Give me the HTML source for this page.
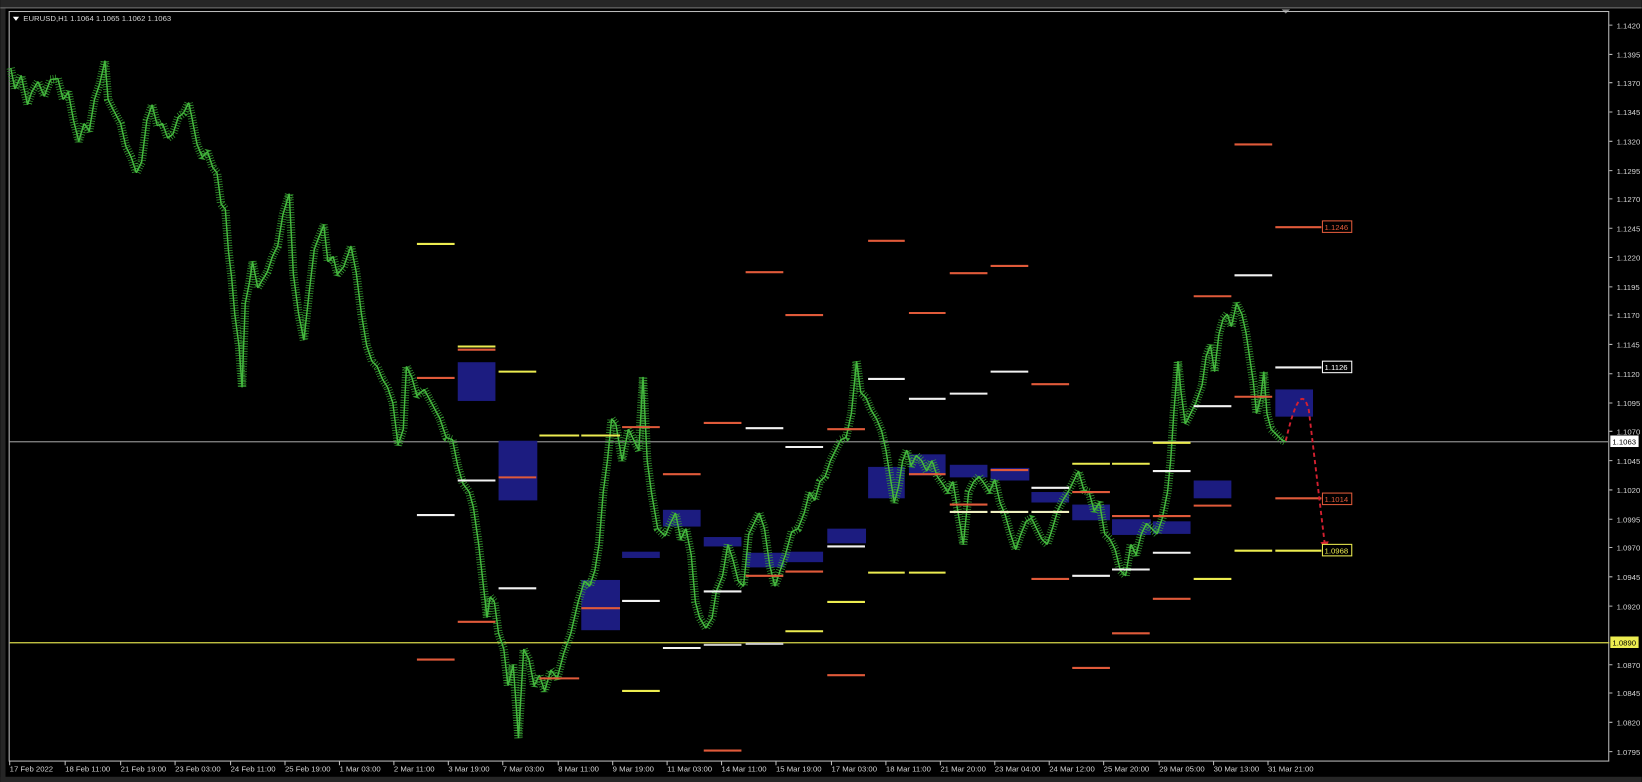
<!DOCTYPE html>
<html><head><meta charset="utf-8"><style>
html,body{margin:0;padding:0;background:#000;width:1642px;height:782px;overflow:hidden}
svg{display:block}
text{font-family:"Liberation Sans",sans-serif;font-size:7.4px;fill:#d4d4d4}
</style></head><body>
<svg width="1642" height="782" viewBox="0 0 1568 747" xmlns="http://www.w3.org/2000/svg">
<defs>
<polyline id="pp" points="10,65 14,85 20,72 26,100 30,88 36,78 42,92 48,76 55,75 60,95 65,88 70,115 75,135 80,118 85,125 90,95 95,80 100,58 103,95 108,105 115,118 120,140 125,150 130,165 135,155 140,115 145,100 150,120 155,118 160,132 165,128 170,112 175,108 180,98 183,112 188,138 193,150 198,145 203,160 207,165 211,195 215,200 218,240 221,265 224,300 228,330 231,370 234,290 238,270 241,250 246,275 250,268 255,260 260,245 265,235 270,205 276,185 280,262 285,300 290,325 295,280 300,238 305,225 309,215 313,250 318,245 322,262 328,255 335,235 340,260 345,300 350,330 355,345 360,350 365,362 370,370 375,385 380,425 385,410 388,350 393,360 398,378 405,372 412,385 420,400 426,418 432,420 437,445 442,462 448,470 452,485 457,520 461,555 465,590 468,570 472,575 476,605 481,620 485,655 490,635 495,705 500,620 505,630 510,655 515,645 520,660 526,640 532,648 538,625 545,605 552,575 558,555 563,560 568,545 572,520 576,470 580,440 584,400 588,405 594,440 600,410 605,420 610,430 614,360 618,440 622,470 628,505 635,512 640,500 645,490 650,515 655,505 660,530 664,575 668,590 674,600 680,590 684,565 690,550 695,520 700,535 705,555 710,560 715,510 720,500 725,490 730,505 735,540 740,560 745,545 750,530 756,508 762,505 768,490 773,470 778,478 783,460 788,455 793,440 798,430 803,420 808,418 813,395 818,345 822,375 827,380 832,392 837,400 842,412 846,430 850,455 854,480 858,465 862,440 866,430 870,445 875,435 880,440 885,450 890,440 895,455 900,462 905,470 910,460 915,490 920,520 925,470 930,460 935,455 940,462 945,470 950,458 955,480 960,492 965,510 970,525 975,510 980,498 985,495 990,505 995,515 1000,520 1005,505 1010,488 1015,478 1020,470 1025,460 1030,450 1035,468 1040,470 1045,488 1050,480 1055,510 1060,515 1065,525 1070,545 1075,550 1080,520 1085,530 1090,510 1095,500 1100,505 1105,510 1110,495 1115,470 1118,440 1121,395 1125,345 1128,375 1132,405 1137,395 1142,385 1148,368 1152,340 1156,330 1160,355 1164,320 1168,305 1172,300 1176,312 1181,290 1186,300 1190,318 1194,345 1197,365 1200,395 1204,380 1207,355 1210,395 1214,410 1219,415 1224,420 1228,422"/>
</defs>
<rect x="0" y="0" width="1568" height="747" fill="#000"/>
<rect x="0" y="0" width="1568" height="8" fill="#262626"/>
<rect x="0" y="0" width="5" height="747" fill="#262626"/>
<rect x="0" y="742" width="1568" height="5" fill="#262626"/>
<line x1="0" y1="7.5" x2="1568" y2="7.5" stroke="#777" stroke-width="1"/>
<path d="M1224 9 L1232 9 L1228 13Z" fill="#888"/>
<rect x="8.5" y="11" width="1528" height="716" fill="none" stroke="#bbb" stroke-width="1"/>
<path d="M12 16 L18 16 L15 20Z" fill="#fff"/>
<text x="22" y="20">EURUSD,H1  1.1064 1.1065 1.1062 1.1063</text>

<line x1="9" y1="422" x2="1537" y2="422" stroke="#8a8a8a" stroke-width="1.2"/>
<line x1="9" y1="614" x2="1537" y2="614" stroke="#d8d84a" stroke-width="1.2"/>

<g fill="#1c1c80">
<rect x="437" y="346" width="36" height="37"/><rect x="476" y="421" width="37" height="57"/>
<rect x="555" y="554" width="37" height="48"/><rect x="594" y="527" width="36" height="6"/>
<rect x="633" y="487" width="36" height="16"/><rect x="672" y="513" width="36" height="9"/>
<rect x="712" y="528" width="37" height="14"/><rect x="750" y="527" width="36" height="10"/>
<rect x="790" y="505" width="37" height="14"/><rect x="829" y="446" width="35" height="30"/>
<rect x="868" y="434" width="35" height="20"/><rect x="907" y="444" width="36" height="12"/>
<rect x="946" y="447" width="37" height="12"/><rect x="985" y="470" width="36" height="10"/>
<rect x="1024" y="482" width="36" height="15"/><rect x="1062" y="496" width="37" height="15"/>
<rect x="1101" y="498" width="36" height="12"/><rect x="1140" y="459" width="36" height="17"/>
<rect x="1218" y="372" width="36" height="26"/>
</g>

<g fill="none" stroke-linejoin="bevel" stroke-linecap="butt">
<use href="#pp" stroke="#37a032" stroke-width="8" stroke-dasharray="0.7 1.7"/>
<use href="#pp" stroke="#45b83f" stroke-width="1.4"/>
</g>

<g stroke-width="2">
<g stroke="#ecec50">
<line x1="398" y1="233" x2="434" y2="233"/><line x1="437" y1="331" x2="473" y2="331"/><line x1="437" y1="334" x2="473" y2="334" stroke="#e05a3a"/>
<line x1="476" y1="355" x2="512" y2="355"/><line x1="515" y1="416" x2="553" y2="416"/><line x1="555" y1="416" x2="592" y2="416"/>
<line x1="594" y1="660" x2="630" y2="660"/><line x1="750" y1="603" x2="786" y2="603"/><line x1="790" y1="575" x2="826" y2="575"/>
<line x1="829" y1="547" x2="864" y2="547"/><line x1="868" y1="547" x2="903" y2="547"/><line x1="1024" y1="443" x2="1060" y2="443"/>
<line x1="1062" y1="443" x2="1098" y2="443"/><line x1="1140" y1="553" x2="1176" y2="553"/><line x1="1179" y1="526" x2="1215" y2="526"/>
<line x1="1218" y1="526" x2="1262" y2="526"/><line x1="1101" y1="423" x2="1137" y2="423"/>
<line x1="907" y1="489" x2="943" y2="489" stroke="#f0f0c0"/><line x1="946" y1="489" x2="982" y2="489" stroke="#f0f0c0"/><line x1="985" y1="489" x2="1021" y2="489" stroke="#f0f0c0"/>
</g>
<g stroke="#f2f2f2">
<line x1="398" y1="492" x2="434" y2="492"/><line x1="437" y1="459" x2="473" y2="459"/><line x1="476" y1="562" x2="512" y2="562"/>
<line x1="594" y1="574" x2="630" y2="574"/><line x1="633" y1="619" x2="669" y2="619"/><line x1="672" y1="565" x2="708" y2="565"/>
<line x1="712" y1="409" x2="748" y2="409"/><line x1="750" y1="427" x2="786" y2="427"/><line x1="790" y1="522" x2="826" y2="522"/>
<line x1="829" y1="362" x2="864" y2="362"/><line x1="868" y1="381" x2="903" y2="381"/><line x1="907" y1="376" x2="943" y2="376"/>
<line x1="946" y1="355" x2="982" y2="355"/><line x1="985" y1="466" x2="1021" y2="466"/><line x1="1024" y1="550" x2="1060" y2="550"/>
<line x1="1062" y1="544" x2="1098" y2="544"/><line x1="1101" y1="528" x2="1137" y2="528"/><line x1="1101" y1="450" x2="1137" y2="450"/>
<line x1="1140" y1="388" x2="1176" y2="388"/><line x1="1179" y1="263" x2="1215" y2="263"/><line x1="1218" y1="351" x2="1262" y2="351"/>
<line x1="672" y1="616" x2="708" y2="616" stroke="#ccc"/><line x1="712" y1="615" x2="748" y2="615" stroke="#ccc"/>
</g>
<g stroke="#e05a3a">
<line x1="398" y1="361" x2="434" y2="361"/><line x1="398" y1="630" x2="434" y2="630"/><line x1="437" y1="594" x2="473" y2="594"/>
<line x1="476" y1="456" x2="512" y2="456"/><line x1="515" y1="648" x2="553" y2="648"/><line x1="555" y1="581" x2="592" y2="581"/>
<line x1="594" y1="408" x2="630" y2="408"/><line x1="633" y1="453" x2="669" y2="453"/><line x1="672" y1="404" x2="708" y2="404"/>
<line x1="712" y1="260" x2="748" y2="260"/><line x1="712" y1="550" x2="748" y2="550"/><line x1="750" y1="301" x2="786" y2="301"/>
<line x1="750" y1="546" x2="786" y2="546"/><line x1="790" y1="410" x2="826" y2="410"/><line x1="790" y1="645" x2="826" y2="645"/>
<line x1="829" y1="230" x2="864" y2="230"/><line x1="868" y1="299" x2="903" y2="299"/><line x1="868" y1="453" x2="903" y2="453"/>
<line x1="907" y1="261" x2="943" y2="261"/><line x1="907" y1="482" x2="943" y2="482"/><line x1="946" y1="254" x2="982" y2="254"/>
<line x1="946" y1="449" x2="982" y2="449"/><line x1="985" y1="367" x2="1021" y2="367"/><line x1="985" y1="553" x2="1021" y2="553"/>
<line x1="1024" y1="470" x2="1060" y2="470"/><line x1="1024" y1="638" x2="1060" y2="638"/><line x1="1062" y1="493" x2="1098" y2="493"/>
<line x1="1062" y1="605" x2="1098" y2="605"/><line x1="1101" y1="572" x2="1137" y2="572"/><line x1="1101" y1="493" x2="1137" y2="493"/>
<line x1="1140" y1="283" x2="1176" y2="283"/><line x1="1140" y1="483" x2="1176" y2="483"/><line x1="1179" y1="138" x2="1215" y2="138"/>
<line x1="1179" y1="379" x2="1215" y2="379"/><line x1="1218" y1="217" x2="1262" y2="217"/><line x1="1218" y1="476" x2="1262" y2="476"/>
<line x1="672" y1="717" x2="708" y2="717"/>
</g>
</g>

<path d="M1228 421 Q1242 360 1250 392 L1265 518" fill="none" stroke="#d42030" stroke-width="1.8" stroke-dasharray="4,3"/>
<path d="M1261 518 L1269 517 L1266 525Z" fill="#d42030"/>

<g>
<rect x="1263" y="211" width="28" height="11" fill="#000" stroke="#e05a3a"/><text x="1265" y="219.5" style="fill:#e05a3a">1.1246</text>
<rect x="1263" y="345" width="28" height="11" fill="#000" stroke="#fff"/><text x="1265" y="353.5" style="fill:#fff">1.1126</text>
<rect x="1263" y="471" width="28" height="11" fill="#000" stroke="#e05a3a"/><text x="1265" y="479.5" style="fill:#e05a3a">1.1014</text>
<rect x="1263" y="520" width="28" height="11" fill="#000" stroke="#ecec50"/><text x="1265" y="528.5" style="fill:#ecec50">1.0968</text>
</g>

<g>
<text x="1544" y="27">1.1420</text><text x="1544" y="55">1.1395</text><text x="1544" y="82">1.1370</text><text x="1544" y="110">1.1345</text>
<text x="1544" y="138">1.1320</text><text x="1544" y="166">1.1295</text><text x="1544" y="193">1.1270</text><text x="1544" y="221">1.1245</text>
<text x="1544" y="249">1.1220</text><text x="1544" y="277">1.1195</text><text x="1544" y="304">1.1170</text><text x="1544" y="332">1.1145</text>
<text x="1544" y="360">1.1120</text><text x="1544" y="388">1.1095</text><text x="1544" y="415">1.1070</text><text x="1544" y="443">1.1045</text>
<text x="1544" y="471">1.1020</text><text x="1544" y="499">1.0995</text><text x="1544" y="526">1.0970</text><text x="1544" y="554">1.0945</text>
<text x="1544" y="582">1.0920</text><text x="1544" y="638">1.0870</text><text x="1544" y="665">1.0845</text>
<text x="1544" y="693">1.0820</text><text x="1544" y="721">1.0795</text>
</g>
<g stroke="#bbb"><path d="M1537 24h3M1537 52h3M1537 79h3M1537 107h3M1537 135h3M1537 163h3M1537 190h3M1537 218h3M1537 246h3M1537 274h3M1537 301h3M1537 329h3M1537 357h3M1537 385h3M1537 412h3M1537 440h3M1537 468h3M1537 496h3M1537 523h3M1537 551h3M1537 579h3M1537 635h3M1537 662h3M1537 690h3M1537 718h3"/></g>
<rect x="1538" y="416" width="27" height="11" fill="#fff"/><text x="1540" y="424.5" style="fill:#000">1.1063</text>
<rect x="1538" y="608" width="27" height="11" fill="#ecec50"/><text x="1540" y="616.5" style="fill:#000">1.0890</text>

<g stroke="#bbb"><path d="M9 727v4M62 727v4M115 727v4M167 727v4M220 727v4M272 727v4M324 727v4M376 727v4M428 727v4M480 727v4M533 727v4M585 727v4M637 727v4M689 727v4M741 727v4M794 727v4M846 727v4M898 727v4M950 727v4M1002 727v4M1054 727v4M1107 727v4M1159 727v4M1211 727v4"/></g>
<g>
<text x="9" y="737">17 Feb 2022</text><text x="62" y="737">18 Feb 11:00</text><text x="115" y="737">21 Feb 19:00</text><text x="167" y="737">23 Feb 03:00</text>
<text x="220" y="737">24 Feb 11:00</text><text x="272" y="737">25 Feb 19:00</text><text x="324" y="737">1 Mar 03:00</text><text x="376" y="737">2 Mar 11:00</text>
<text x="428" y="737">3 Mar 19:00</text><text x="480" y="737">7 Mar 03:00</text><text x="533" y="737">8 Mar 11:00</text><text x="585" y="737">9 Mar 19:00</text>
<text x="637" y="737">11 Mar 03:00</text><text x="689" y="737">14 Mar 11:00</text><text x="741" y="737">15 Mar 19:00</text><text x="794" y="737">17 Mar 03:00</text>
<text x="846" y="737">18 Mar 11:00</text><text x="898" y="737">21 Mar 20:00</text><text x="950" y="737">23 Mar 04:00</text><text x="1002" y="737">24 Mar 12:00</text>
<text x="1054" y="737">25 Mar 20:00</text><text x="1107" y="737">29 Mar 05:00</text><text x="1159" y="737">30 Mar 13:00</text><text x="1211" y="737">31 Mar 21:00</text>
</g>
</svg>
</body></html>
